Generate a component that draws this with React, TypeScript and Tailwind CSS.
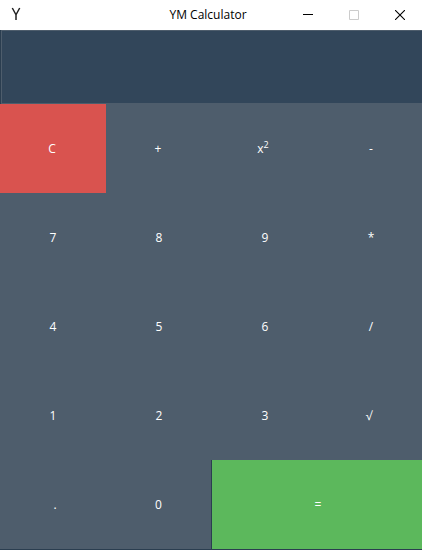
import { useState } from "react";

type Key = { label: string; name: string; className?: string };

const keys: Key[] = [
  { label: "C", name: "Clear", className: "bg-[#d9534f] pr-0.5" },
  { label: "+", name: "Add", className: "pr-0.5" },
  { label: "x²", name: "Square", className: "pr-1" },
  { label: "-", name: "Subtract" },
  { label: "7", name: "7" },
  { label: "8", name: "8" },
  { label: "9", name: "9" },
  { label: "*", name: "Multiply" },
  { label: "4", name: "4" },
  { label: "5", name: "5" },
  { label: "6", name: "6" },
  { label: "/", name: "Divide" },
  { label: "1", name: "1" },
  { label: "2", name: "2" },
  { label: "3", name: "3" },
  { label: "√", name: "Square root", className: "pr-1" },
  { label: ".", name: "Decimal point", className: "pl-1" },
  { label: "0", name: "0", className: "border-r border-[#2b3e50]" },
  { label: "=", name: "Equals", className: "col-span-2 bg-[#5cb85c]" },
];

function evaluate(source: string): string {
  const tokens = source.match(/\d*\.?\d+|[-+*/]/g) ?? [];
  let total = 0;
  let term = Number(tokens[0]);
  for (let i = 1; i < tokens.length; i += 2) {
    const value = Number(tokens[i + 1]);
    if (tokens[i] === "*") term *= value;
    else if (tokens[i] === "/") term /= value;
    else {
      total += term;
      term = tokens[i] === "+" ? value : -value;
    }
  }
  const result = total + term;
  return Number.isFinite(result) ? String(result) : "Error";
}

function TitleBar() {
  return (
    <header className="grid h-[30px] shrink-0 grid-cols-[1fr_auto_1fr] items-center bg-white text-black">
      <svg className="ml-2.5 h-4 w-3" viewBox="0 0 12 16" fill="none" stroke="#222" strokeWidth="1.5" aria-hidden="true">
        <path d="M2.3 1 6 7.8 9.7 1M6 7.5V13" />
      </svg>
      <h1 className="pr-1.5 text-xs">YM Calculator</h1>
      <div className="-mr-px flex h-full justify-end">
        <button aria-label="Minimize" className="flex w-[46px] items-center justify-center">
          <svg width="10" height="10" viewBox="0 0 10 10" stroke="#000" aria-hidden="true">
            <path d="M0 4.5h10" />
          </svg>
        </button>
        <button aria-label="Maximize" disabled className="flex w-[46px] items-center justify-center">
          <svg width="10" height="10" viewBox="0 0 10 10" fill="none" stroke="#ccc" aria-hidden="true">
            <path d="M.5 0.5h9v9h-9z" />
          </svg>
        </button>
        <button aria-label="Close" className="flex w-[46px] items-center justify-center">
          <svg width="10" height="10" viewBox="0 0 10 10" stroke="#000" strokeWidth="1.1" aria-hidden="true">
            <path d="M0 0l10 10M10 0 0 10" />
          </svg>
        </button>
      </div>
    </header>
  );
}

export default function App() {
  const [entry, setEntry] = useState("");

  const press = (label: string) => {
    if (label === "C") setEntry("");
    else if (label === "=") setEntry(evaluate(entry));
    else if (label === "x²") setEntry(String(Number(evaluate(entry)) ** 2));
    else if (label === "√") setEntry(String(Math.sqrt(Number(evaluate(entry)))));
    else setEntry(entry + label);
  };

  return (
    <div className="flex min-h-screen flex-col overflow-hidden bg-[#2b3e50] font-['Open_Sans','Noto_Sans',sans-serif] text-xs text-white">
      <TitleBar />
      <input
        aria-label="Display"
        value={entry}
        onChange={(e) => setEntry(e.target.value)}
        className="ml-px h-[74px] border border-r-0 border-[#4e5d6c] bg-[#32465a] px-2 text-right text-2xl outline-none"
      />
      <main className="-mr-0.5 mb-px grid flex-1 auto-rows-fr grid-cols-4">
        {keys.map(({ label, name, className = "" }) => (
          <button
            key={name}
            aria-label={name}
            onClick={() => press(label)}
            className={`flex items-center justify-center ${className.includes("bg-") ? "" : "bg-[#4e5d6c]"} ${className}`}
          >
            {label === "x²" ? (
              <span>
                x<sup className="text-[9px]">2</sup>
              </span>
            ) : (
              label
            )}
          </button>
        ))}
      </main>
    </div>
  );
}
